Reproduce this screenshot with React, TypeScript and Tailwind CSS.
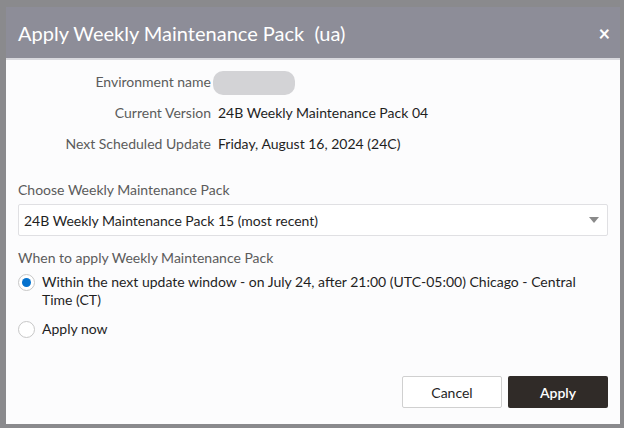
import React, { useState } from "react";

const font = { fontFamily: "Lato, 'Noto Sans', sans-serif" };

const InfoRow: React.FC<{ label: string; children: React.ReactNode }> = (props) => {
  return (
    <div className="flex items-center h-[31px]">
      <div className="w-[200px] text-right text-[14px] text-[#5b5b5b] pr-[7px]">{props.label}</div>
      <div className="text-[14px] text-[#1f1f1f]">{props.children}</div>
    </div>
  );
};

const Radio: React.FC<{ checked: boolean; onClick: () => void; children: React.ReactNode }> = (props) => {
  return (
    <div className="flex items-start gap-[7px] cursor-pointer" onClick={props.onClick}>
      <span className="mt-[1px] flex h-[17px] w-[17px] shrink-0 items-center justify-center rounded-full border border-[#c7c7c7] bg-white">
        {props.checked && <span className="h-[9px] w-[9px] rounded-full bg-[#0572ce]" />}
      </span>
      <span className="text-[14px] leading-[18px] text-[#1f1f1f]">{props.children}</span>
    </div>
  );
};

export default function App() {
  const [when, setWhen] = useState("window");

  return (
    <div className="relative h-[428px] w-[624px] overflow-hidden bg-[#8a8a8d]" style={font}>
      {/* dialog */}
      <div className="absolute left-[6px] top-[7px] flex h-[417px] w-[614px] flex-col bg-[#fcfcfd]">
        <div className="flex h-[53px] items-center justify-between bg-[#8d8d98] pl-[12px] pr-[10px] border-b-2 border-[#d9d9de]">
          <h1 className="text-[20px] text-white">Apply Weekly Maintenance Pack&nbsp; (ua)</h1>
          <span className="text-[20px] font-bold text-white leading-none">×</span>
        </div>

        <div className="flex flex-col px-[12px] pt-[6px]">
          <InfoRow label="Environment name">
            <span className="-ml-[5px] mt-[2px] block h-[24px] w-[82px] rounded-[10px] bg-[#d3d3d6]" />
          </InfoRow>
          <InfoRow label="Current Version">24B Weekly Maintenance Pack 04</InfoRow>
          <InfoRow label="Next Scheduled Update">Friday, August 16, 2024 (24C)</InfoRow>

          <div className="h-[22px]" />
          <p className="text-[14px] text-[#5b5b5b] leading-[18px]">Choose Weekly Maintenance Pack</p>
          <div className="mt-[5px] flex h-[32px] items-center justify-between rounded-[2px] border border-[#e0e0e3] bg-white pl-[5px] pr-[8px]">
            <span className="text-[14px] text-[#1f1f1f]">24B Weekly Maintenance Pack 15 (most recent)</span>
            <svg width="10" height="6" viewBox="0 0 10 6">
              <path d="M0 0 L10 0 L5 6 Z" fill="#8a8a8a" />
            </svg>
          </div>

          <p className="mt-[13px] text-[14px] text-[#5b5b5b] leading-[18px]">When to apply Weekly Maintenance Pack</p>
          <div className="mt-[6px] flex flex-col gap-[11px]">
            <Radio checked={when === "window"} onClick={() => setWhen("window")}>
              Within the next update window - on July 24, after 21:00 (UTC-05:00) Chicago - Central
              <br />
              Time (CT)
            </Radio>
            <Radio checked={when === "now"} onClick={() => setWhen("now")}>
              Apply now
            </Radio>
          </div>
        </div>

        <div className="mt-auto flex justify-end gap-[6px] px-[12px] pb-[16px]">
          <button className="h-[32px] w-[100px] rounded-[2px] border border-[#d0d0d0] bg-white text-[14px] text-[#1f1f1f]" type="button">
            Cancel
          </button>
          <button className="h-[32px] w-[100px] rounded-[2px] bg-[#302b28] text-[14px] font-semibold text-white" type="button">
            Apply
          </button>
        </div>
      </div>
    </div>
  );
}
